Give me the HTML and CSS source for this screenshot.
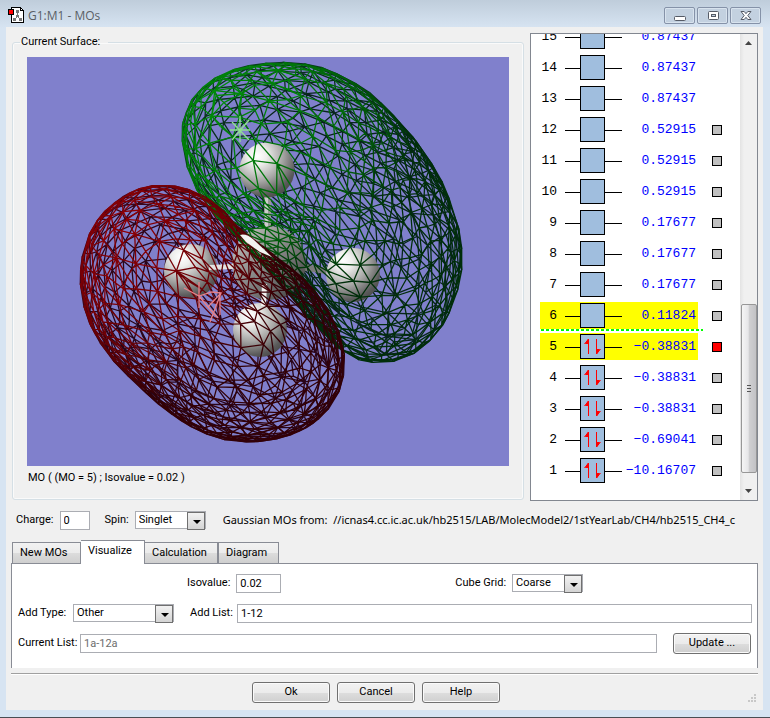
FILE: index.html
```html
<!DOCTYPE html>
<html lang="en">
<head>
<meta charset="utf-8">
<title>G1:M1 - MOs</title>
<link rel="stylesheet" href="styles.css">
</head>
<body>
<div class="window">
  <header class="titlebar">
    <svg class="app-icon" width="16" height="16" viewBox="0 0 16 16" shape-rendering="crispEdges">
      <path d="M3.5.5h9l3 3v12h-12z" fill="#fff" stroke="#000"/>
      <path d="M12.500 .5v3h3" fill="none" stroke="#000"/>
      <path d="M9.500 5v5M9.500 9l-3 4M9.500 9l3 4" stroke="#777" fill="none"/>
      <path d="M8 3h3v3h-3zM5 11h3v3h-3zM11 11h3v3h-3zM8 8h3v2h-3z" fill="#777"/>
      <path d="M.5 2.500h5v5h-5z" fill="#f00" stroke="#000"/>
    </svg>
    <h1 class="title">G1:M1 - MOs</h1>
    <div class="caption-buttons">
      <button class="cap" aria-label="Minimize"><svg width="14" height="12" viewBox="0 0 14 12"><rect x="1.500" y="6.500" width="11" height="4" rx="1" fill="#fff" stroke="#555b66"/></svg></button>
      <button class="cap" aria-label="Maximize"><svg width="14" height="12" viewBox="0 0 14 12"><rect x="2.500" y="1.500" width="10" height="8" rx="1" fill="#fff" stroke="#555b66"/><rect x="5.500" y="4.500" width="4" height="2" fill="#c0cedd" stroke="#555b66"/></svg></button>
      <button class="cap" aria-label="Close"><svg width="14" height="12" viewBox="0 0 14 12"><path d="M2 1.500h3.200L7 3.700l1.800-2.200H12L8.800 5.500 12 9.500H8.800L7 7.300 5.200 9.500H2l3.200-4z" fill="#fff" stroke="#555b66"/></svg></button>
    </div>
  </header>

  <main class="client">
    <div class="upper">
      <fieldset class="surface">
        <legend>Current Surface:</legend>
        <svg class="view" id="view" viewBox="27 57 482 409" role="img" aria-label="Molecular orbital surface">
          <defs>
            <radialGradient id="ball" cx="0.32" cy="0.24" r="0.85">
              <stop offset="0" stop-color="#fff"/><stop offset="0.2" stop-color="#eeeeec"/>
              <stop offset="0.55" stop-color="#a6a6a4"/><stop offset="0.85" stop-color="#5a5a5a"/><stop offset="1" stop-color="#484848"/>
            </radialGradient>
            <linearGradient id="core" x1="0" y1="0" x2="1" y2="1">
              <stop offset="0.15" stop-color="#b4b4b0"/><stop offset="0.5" stop-color="#858585"/><stop offset="0.9" stop-color="#484848"/>
            </linearGradient>
          </defs>
          <g id="back"></g>
          <g id="atoms">
            <path d="M264 195h7v40h-7z" fill="#999"/><path d="M265 195h3v40h-3z" fill="#ccc"/>
            <path d="M300 263L332 269v6L300 270z" fill="#7b7b7b"/>
            <circle cx="269" cy="263" r="37" fill="url(#core)"/>
            <circle cx="267" cy="170" r="27.500" fill="url(#ball)"/>
            <circle cx="353" cy="275" r="27" fill="url(#ball)"/>
            <circle cx="191" cy="271" r="27" fill="url(#ball)"/>
            <path d="M209 265l24-1v5l-24 1z" fill="#e4e4e2"/>
            <circle cx="260" cy="330" r="27" fill="url(#ball)"/>
            <path d="M262 284h5l-1 22h-5z" fill="#f2f2f0"/>
          </g>
          <g id="front"></g>
          <path d="M240 235Q246 233 254 240L272 257L260 252L246 242z" fill="#f4f4f2"/>
        </svg>
        <p class="caption">MO ( (MO = 5) ; Isovalue = 0.02 )</p>
      </fieldset>

      <section class="levels">
        <ol class="rows" id="rows"></ol>
        <div class="scrollbar">
          <svg width="7" height="4" viewBox="0 0 7 4"><path d="M0 4L3.500 0L7 4z" fill="#444"/></svg>
          <div class="thumb"><i></i><i></i><i></i></div>
          <svg width="7" height="4" viewBox="0 0 7 4"><path d="M0 0L3.500 4L7 0z" fill="#444"/></svg>
        </div>
      </section>
    </div>

    <div class="line setup">
      <label for="charge">Charge:</label>
      <input id="charge" class="box charge" value="0">
      <label for="spin">Spin:</label>
      <span class="combo spin"><select id="spin"><option>Singlet</option></select></span>
      <span class="source">Gaussian MOs from: &nbsp;//icnas4.cc.ic.ac.uk/hb2515/LAB/MolecModel2/1stYearLab/CH4/hb2515_CH4_c</span>
    </div>

    <nav class="tabs" role="tablist">
      <button class="tab t1" role="tab">New MOs</button>
      <button class="tab t2 active" role="tab" aria-selected="true">Visualize</button>
      <button class="tab t3" role="tab">Calculation</button>
      <button class="tab t4" role="tab">Diagram</button>
    </nav>
    <section class="page">
      <div class="line first">
        <label for="iso">Isovalue:</label>
        <input id="iso" class="box iso" value="0.02">
        <label for="grid" class="grid-label">Cube Grid:</label>
        <span class="combo grid"><select id="grid"><option>Coarse</option></select></span>
      </div>
      <div class="line">
        <label for="type" class="type-label">Add Type:</label>
        <span class="combo type"><select id="type"><option>Other</option></select></span>
        <label for="add" class="add-label">Add List:</label>
        <input id="add" class="box fill" value="1-12">
      </div>
      <div class="line">
        <label for="cur" class="cur-label">Current List:</label>
        <input id="cur" class="box fill" value="1a-12a" disabled>
        <button class="btn update">Update ...</button>
      </div>
    </section>

    <footer class="actions">
      <button class="btn">Ok</button>
      <button class="btn">Cancel</button>
      <button class="btn">Help</button>
      <svg class="grip" width="9" height="9" viewBox="0 0 9 9"><path d="M7 0h2v2h-2zM4 3h2v2h-2zM7 3h2v2h-2zM1 6h2v2h-2zM4 6h2v2h-2zM7 6h2v2h-2z" fill="#c8c8c8"/></svg>
    </footer>
  </main>
</div>
<script src="app.js"></script>
</body>
</html>
```
FILE: styles.css
```css
* { box-sizing: border-box; }
body {
  margin: 0;
  background: #d7e4f2;
  color: #000;
  font: 11px/14px Roboto, "Liberation Sans", sans-serif;
}
button, input, select { font: inherit; color: inherit; margin: 0; }
p, h1, ol, fieldset { margin: 0; padding: 0; }

.window {
  display: flex;
  flex-direction: column;
  min-height: 100vh;
  padding: 0 7px 7px 6px;
  border-bottom: 1px solid #4a4d52;
  background: linear-gradient(#bfcddb, #d7e4f2 28px);
}
.titlebar { display: flex; height: 27px; padding: 7px 0 0 2px; gap: 4px; }
.title { flex: 1; font: 12px/17px "Open Sans", sans-serif; color: #5a5f66; }
.caption-buttons { display: flex; gap: 2px; padding-right: 2px; }
.cap {
  display: flex;
  align-items: center;
  justify-content: center;
  width: 31px;
  height: 17px;
  padding: 0;
  border: 1px solid #8592a8;
  border-radius: 2px;
  background: #c3d1e0;
  box-shadow: inset 0 0 0 1px #d8e3ee;
}

.client { flex: 1; display: flex; flex-direction: column; background: #f0f0f0; padding: 6px 5px 0; }
.upper { display: flex; gap: 6px; height: 468px; }
.surface {
  position: relative;
  flex: 1;
  min-width: 0;
  margin: 0 0 1px 1px;
  padding: 0 14px;
  border: 1px solid #d5dfe5;
  border-radius: 3px;
  box-shadow: inset 0 0 0 1px #fafafa;
}
.surface legend { margin-left: -7px; padding: 0 8px 0 1px; line-height: 18px; }
.view { display: block; width: 100%; margin-top: 6px; background: #8080cc; }
.view path.mesh { fill: none; stroke-width: 1.3; }
.caption { padding: 5px 1px; }

.levels { display: flex; width: 228px; border: 1px solid #828790; background: #fff; }
.rows {
  flex: 1;
  display: flex;
  flex-direction: column;
  justify-content: flex-end;
  padding: 0 0 14px 9px;
  overflow: hidden;
  list-style: none;
  font: 13px/27px "Liberation Mono", monospace;
}
.row { position: relative; display: flex; flex: none; align-items: center; height: 31px; }
.level { display: flex; align-items: center; justify-content: space-between; width: 158px; height: 27px; }
.row.hot .level { background: #ff0; }
.num { width: 17px; text-align: right; }
.orbital { width: 57px; height: 25px; margin-left: 8px; flex: none; }
.energy { flex: 1; margin-right: 2px; display: flex; justify-content: flex-end; color: #00f; white-space: pre; }
.row.lumo::after {
  content: "";
  position: absolute;
  left: 1px;
  bottom: 0;
  width: 162px;
  height: 2px;
  background: repeating-linear-gradient(90deg, #0f0 0 3px, #fff 3px 5px);
}
.pick { appearance: none; width: 10px; height: 10px; margin-left: 14px; border: 1px solid #000; background: #c0c0c0; }
.pick:checked { background: #f00; }

.scrollbar {
  display: flex;
  flex-direction: column;
  align-items: center;
  justify-content: space-between;
  width: 17px;
  padding: 7px 0;
  background: linear-gradient(90deg, #e3e3e3, #f0f0f0 4px);
}
.thumb {
  display: flex;
  flex-direction: column;
  justify-content: center;
  gap: 2px;
  width: 16px;
  height: 169px;
  margin: auto 0 16px;
  padding: 0 5px;
  border: 1px solid #979797;
  border-radius: 2px;
  background: linear-gradient(90deg, #f5f5f5, #e6e6e8 45%, #d0d0d2 50%, #c2c2c5);
}
.thumb i { height: 1px; background: #555; }

.line { display: flex; align-items: center; height: 20px; }
.box {
  height: 19px;
  padding: 0 3px;
  border: 1px solid #abadb3;
  border-radius: 0;
  background: #fff;
  min-width: 0;
}
.box:disabled { color: #6d6d6d; }
.combo { position: relative; display: flex; height: 18px; border: 1px solid #abadb3; background: #fff; }
.combo select { appearance: none; width: 100%; padding: 0 3px; border: 0; border-radius: 0; background: transparent; line-height: 14px; }
.combo::before {
  content: "";
  position: absolute;
  top: 0;
  right: 0;
  width: 16px;
  height: 16px;
  border: 1px solid #707070;
  background: linear-gradient(#f2f2f2, #d4d4d4);
}
.combo::after {
  content: "";
  position: absolute;
  top: 8px;
  right: 4px;
  border: 4px solid transparent;
  border-top-color: #000;
  border-bottom: 0;
}

.setup { margin-top: 9px; padding: 0 6px 0 5px; }
.charge { width: 30px; margin: 0 15px 0 6px; }
.spin { width: 71px; margin: 0 17px 0 6px; }
.source { flex: 1; min-width: 0; overflow: hidden; white-space: nowrap; font: 11px/16px "Noto Sans", sans-serif; }

.tabs { display: flex; align-items: flex-end; height: 23px; margin-top: 10px; padding-left: 1px; }
.tab {
  height: 21px;
  padding: 0 7px 1px;
  text-align: left;
  border: 1px solid #898c95;
  border-left-width: 0;
  border-bottom: 0;
  background: linear-gradient(#f2f2f2, #ebebeb 50%, #dcdcdc 51%, #cfcfcf);
}
.t1 { width: 69px; border-left-width: 1px; }
.t2 { width: 64px; }
.t3 { width: 73px; }
.t4 { width: 61px; border-left-width: 1px; }
.tab.active { height: 24px; margin-bottom: -1px; padding-bottom: 3px; background: #fff; z-index: 1; }
.page {
  display: flex;
  flex-direction: column;
  gap: 10px;
  height: 105px;
  padding: 9px 5px 0 6px;
  border: 1px solid #898c95;
  border-bottom: 0;
  background: #fff;
}
.page .line { height: 20px; }
.first { padding-left: 169px; }
.iso { width: 45px; margin-left: 6px; }
.grid-label { margin-left: 174px; }
.grid { width: 71px; margin-left: 6px; }
.type-label { width: 55px; }
.type { width: 101px; }
.add-label { width: 47px; margin-left: 16px; }
.cur-label { width: 62px; }
.fill { flex: 1; }

.btn {
  width: 78px;
  height: 21px;
  padding: 0 0 1px;
  border: 1px solid #707070;
  border-radius: 3px;
  background: linear-gradient(#f2f2f2, #ebebeb 50%, #dddddd 51%, #cfcfcf);
  box-shadow: inset 0 0 0 1px #fafafa;
}
.update { margin: 0 1px 0 16px; }
.actions {
  display: flex;
  justify-content: center;
  gap: 7px;
  margin-top: 5px;
  padding: 8px 17px 7px 0;
  border-top: 1px solid #a0a0a0;
  box-shadow: inset 0 1px #fff;
  position: relative;
}
.grip { position: absolute; right: 2px; bottom: 7px; }
```
FILE: app.js
```js
// Energy levels, highest first
var levels = [
  [15, "0.87437"], [14, "0.87437"], [13, "0.87437"], [12, "0.52915"], [11, "0.52915"],
  [10, "0.52915"], [9, "0.17677"], [8, "0.17677"], [7, "0.17677"], [6, "0.11824"],
  [5, "\u22120.38831"], [4, "\u22120.38831"], [3, "\u22120.38831"], [2, "\u22120.69041"], [1, "\u221210.16707"]
];
document.getElementById("rows").innerHTML = levels.map(function (l) {
  var n = l[0];
  var electrons = n < 6
    ? '<path d="M23.500 20V5L19.500 10M31.500 5V20L35.500 15" fill="none" stroke="#f00" stroke-width="1"/><path d="M23 5v5h-3zM32 20v-5h3z" fill="#f00"/>' : "";
  return '<li class="row' + (n === 5 || n === 6 ? " hot" : "") + (n === 6 ? " lumo" : "") + '">' +
    '<div class="level"><span class="num">' + n + '</span>' +
    '<svg class="orbital" viewBox="0 0 57 25" shape-rendering="crispEdges"><path d="M0 13.500H57" stroke="#000"/>' +
    '<rect x="15.500" y=".5" width="24" height="24" fill="#a0bede" stroke="#000"/><g shape-rendering="auto">' + electrons + '</g></svg>' +
    '<span class="energy">' + l[1] + '</span></div>' +
    (n < 13 ? '<input class="pick" type="checkbox" aria-label="MO ' + n + '"' + (n === 5 ? " checked" : "") + '>' : "") + '</li>';
}).join("");

// Closed outline of a lobe, sampled as radius against angle about a centre
function outline(cx, cy, pts) {
  var a = pts.map(function (p) {
    return [Math.atan2(p[1] - cy, p[0] - cx), Math.hypot(p[0] - cx, p[1] - cy)];
  }).sort(function (p, q) { return p[0] - q[0]; });
  var n = a.length;
  function at(i) {
    var k = Math.floor(i / n);
    return [a[i - k * n][0] + k * 2 * Math.PI, a[i - k * n][1]];
  }
  return function (t) {
    var i = -1;
    while (at(i + 1)[0] <= t) i++;
    var p0 = at(i - 1)[1], p1 = at(i), p2 = at(i + 1), p3 = at(i + 2)[1];
    var u = (t - p1[0]) / (p2[0] - p1[0]);
    return p1[1] + 0.5 * u * (p2[1] - p0 + u * (2 * p0 - 5 * p1[1] + 4 * p2[1] - p3 + u * (3 * (p1[1] - p2[1]) + p3 - p0)));
  };
}

// Triangulated unit sphere from marching tetrahedra, with vertices that lie
// close together merged so that no sliver triangles are left; returns its edges
function sphereMesh(h, turn, tilt) {
  var ct = Math.cos(turn), st = Math.sin(turn), cp = Math.cos(tilt), sp = Math.sin(tilt);
  var N = Math.ceil(1.1 / h), raw = [], index = {}, verts = [], parent = [];
  var tets = [[0, 5, 1, 6], [0, 1, 2, 6], [0, 2, 3, 6], [0, 3, 7, 6], [0, 7, 4, 6], [0, 4, 5, 6]];
  var corner = [[0, 0, 0], [1, 0, 0], [1, 1, 0], [0, 1, 0], [0, 0, 1], [1, 0, 1], [1, 1, 1], [0, 1, 1]];
  function f(p) { return Math.hypot(p[0], p[1], p[2]) - 1; }
  function rot(p) {
    var x = p[0] * ct - p[1] * st, y = p[0] * st + p[1] * ct, z = p[2];
    return [x, y * cp - z * sp, y * sp + z * cp];
  }
  function id(p) {
    var k = p.map(function (v) { return v.toFixed(4); }).join();
    if (!(k in index)) {
      index[k] = verts.length;
      parent.push(verts.length);
      verts.push(rot(p));
    }
    return index[k];
  }
  function add(p, q) { raw.push([id(p), id(q)]); }
  for (var i = -N; i < N; i++) for (var j = -N; j < N; j++) for (var k = -N; k < N; k++) {
    var c = corner.map(function (o) { return [(i + o[0] + 0.31) * h, (j + o[1] + 0.17) * h, (k + o[2] + 0.43) * h]; });
    tets.forEach(function (t) {
      var inn = [], out = [];
      t.forEach(function (v) { (f(c[v]) < 0 ? inn : out).push(c[v]); });
      if (!inn.length || !out.length) return;
      function cut(a, b) {
        var u = f(a) / (f(a) - f(b));
        return [a[0] + u * (b[0] - a[0]), a[1] + u * (b[1] - a[1]), a[2] + u * (b[2] - a[2])];
      }
      if (inn.length === 2) {
        var q = [cut(inn[0], out[0]), cut(inn[0], out[1]), cut(inn[1], out[1]), cut(inn[1], out[0])];
        add(q[0], q[1]); add(q[1], q[2]); add(q[2], q[3]); add(q[3], q[0]); add(q[0], q[2]);
      } else {
        var one = inn.length === 1 ? inn[0] : out[0], rest = inn.length === 1 ? out : inn;
        var r = rest.map(function (v) { return cut(one, v); });
        add(r[0], r[1]); add(r[1], r[2]); add(r[2], r[0]);
      }
    });
  }
  function root(v) { return parent[v] === v ? v : root(parent[v]); }
  raw.map(function (e) {
    var a = verts[e[0]], b = verts[e[1]];
    return [Math.hypot(a[0] - b[0], a[1] - b[1], a[2] - b[2]), e];
  }).sort(function (a, b) { return a[0] - b[0]; }).forEach(function (d) {
    var a = root(d[1][0]), b = root(d[1][1]);
    if (a === b) return;
    var p = verts[a], q = verts[b];
    if (Math.hypot(p[0] - q[0], p[1] - q[1], p[2] - q[2]) < 0.5 * h) {
      verts[a] = [(p[0] + q[0]) / 2, (p[1] + q[1]) / 2, (p[2] + q[2]) / 2];
      parent[b] = a;
    }
  });
  var edges = {};
  raw.forEach(function (e) {
    var a = root(e[0]), b = root(e[1]);
    if (a !== b) edges[Math.min(a, b) + "-" + Math.max(a, b)] = [verts[a], verts[b]];
  });
  return Object.values(edges);
}

function lobe(cx, cy, pts, mesh, colour) {
  var radius = outline(cx, cy, pts), bins = { back: {}, front: {} };
  function place(p) {
    var t = Math.atan2(p[1], p[0]), r = Math.hypot(p[0], p[1]) * radius(t);
    return (cx + r * Math.cos(t)).toFixed(1) + " " + (cy + r * Math.sin(t)).toFixed(1);
  }
  mesh.forEach(function (e) {
    var x = (e[0][0] + e[1][0]) / 2, y = (e[0][1] + e[1][1]) / 2, z = (e[0][2] + e[1][2]) / 2;
    var front = z > 0;
    var light = -0.62 * x - 0.6 * y + 0.45 * z;
    if (!front) light = light * 0.55 - 0.1;
    var level = Math.max(0, Math.min(9, Math.round(light * 9)));
    var side = bins[front ? "front" : "back"];
    side[level] = (side[level] || "") + "M" + place(e[0]) + "L" + place(e[1]);
  });
  ["back", "front"].forEach(function (s) {
    document.getElementById(s).innerHTML += Object.keys(bins[s]).map(function (l) {
      return '<path class="mesh" stroke="' + colour(l / 9, s) + '" d="' + bins[s][l] + '"/>';
    }).join("");
  });
}

lobe(320, 212, [[280,62],[310,64],[340,75],[370,93],[400,122],[430,160],[450,200],[461,240],[462,270],[455,300],[440,330],[420,350],[397,361],[373,363],[345,353],[320,329],[290,295],[260,263],[232,232],[205,202],[189,172],[182,143],[184,115],[197,92],[220,75],[250,65]],
  sphereMesh(0.15, 0.2, 0.25), function (v, s) {
    return s === "back" ? "rgb(8," + Math.round(38 + 80 * v) + ",28)" : "rgb(0," + Math.round(46 + 92 * v) + ",10)";
  });
lobe(212, 314, [[160,185],[185,188],[210,200],[240,229],[275,256],[303,278],[326,306],[340,335],[345,365],[338,395],[318,420],[285,437],[245,442],[205,434],[170,413],[135,383],[105,350],[87,318],[80,282],[84,248],[97,220],[120,198],[140,188]],
  sphereMesh(0.155, 0.1, -0.2), function (v, s) {
    return s === "back" ? "rgb(" + Math.round(42 + 75 * v) + ",5,25)" : "rgb(" + Math.round(50 + 90 * v) + ",0,6)";
  });

// Specular glints on the two surfaces
document.getElementById("front").innerHTML +=
  '<path class="mesh" stroke="#90e090" d="M240 116V142M230 130H250M232 122L249 140M249 120L232 140"/>' +
  '<path class="mesh" stroke="#e88088" d="M199 282V308M184 288L199 296L212 292L221 293L208 307L199 296M208 307L218 318M221 293L210 322M220 293V315"/>';
```
